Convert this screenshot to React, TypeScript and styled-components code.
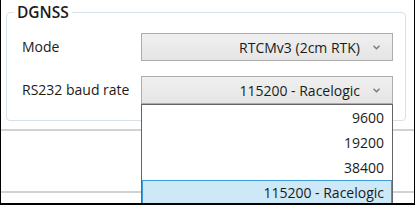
import React from 'react';
import styled, { createGlobalStyle } from 'styled-components';

const GlobalStyle = createGlobalStyle`
  html, body {
    margin: 0;
    padding: 0;
    background: #ffffff;
  }
  body {
    font-family: "Open Sans", "Noto Sans", "Liberation Sans", sans-serif;
    color: #1b1b1b;
  }
`;

const Frame = styled.div`
  position: relative;
  width: 415px;
  height: 205px;
  box-sizing: border-box;
  border: 1px solid #000;
  border-top: none;
  border-bottom-width: 2px;
  background: #fff;
  overflow: hidden;
`;

const GroupBox = styled.div`
  position: relative;
  margin: 12px 8px 0 5px;
  height: 109px;
  box-sizing: border-box;
  border: 1px solid #d9e1e8;
  border-radius: 4px;
  padding: 20px 12px 0 15px;
  display: flex;
  flex-direction: column;
  gap: 15px;
`;

const Legend = styled.div`
  position: absolute;
  top: -11px;
  left: 7px;
  padding: 0 3px;
  background: #fff;
  font-size: 15.5px;
  font-weight: 600;
  line-height: 20px;
  color: #1b1b1b;
`;

const Row = styled.div`
  display: flex;
  align-items: center;
  height: 28px;
`;

const Label = styled.span`
  width: 119px;
  font-size: 14px;
  line-height: 20px;
`;

const Combo = styled.div`
  position: relative;
  width: 252px;
  height: 28px;
  box-sizing: border-box;
  border: 1px solid #acacac;
  background: linear-gradient(#f0f0f0, #e5e5e5);
  display: flex;
  align-items: center;
  justify-content: flex-end;
  padding-right: 12px;
  gap: 13px;
  font-size: 14px;
`;

const Chevron = () => (
  <svg width="7" height="5" viewBox="0 0 7 5">
    <path d="M0.5 0.8 L3.5 3.8 L6.5 0.8" fill="none" stroke="#7a7a7a" strokeWidth="1.4" />
  </svg>
);

const Divider = styled.div<{ $top: number }>`
  height: 2px;
  background: #d2d2d2;
  margin-top: ${p => p.$top}px;
`;

const DropList = styled.div`
  position: absolute;
  top: 27px;
  left: -1px;
  width: 252px;
  box-sizing: border-box;
  border: 1px solid #646464;
  background: #fff;
  z-index: 10;
`;

const Item = styled.div<{ $selected?: boolean }>`
  height: 25px;
  box-sizing: border-box;
  display: flex;
  align-items: center;
  justify-content: flex-end;
  padding-right: 7px;
  font-size: 14px;
  border: 1px solid ${p => (p.$selected ? '#3c9ad8' : 'transparent')};
  background: ${p => (p.$selected ? '#cde8f7' : 'transparent')};
`;

const bauds = ['9600', '19200', '38400', '115200 - Racelogic'];

export default function App() {
  return (
    <>
      <GlobalStyle />
      <Frame>
        <GroupBox>
          <Legend>DGNSS</Legend>
          <Row>
            <Label>Mode</Label>
            <Combo>
              <span>RTCMv3 (2cm RTK)</span>
              <Chevron />
            </Combo>
          </Row>
          <Row>
            <Label>RS232 baud rate</Label>
            <Combo>
              <span>115200 - Racelogic</span>
              <Chevron />
              <DropList>
                {bauds.map(b => (
                  <Item key={b} $selected={b === '115200 - Racelogic'}>
                    {b}
                  </Item>
                ))}
              </DropList>
            </Combo>
          </Row>
        </GroupBox>
        <Divider $top={8} />
        <Divider $top={60} />
      </Frame>
    </>
  );
}
